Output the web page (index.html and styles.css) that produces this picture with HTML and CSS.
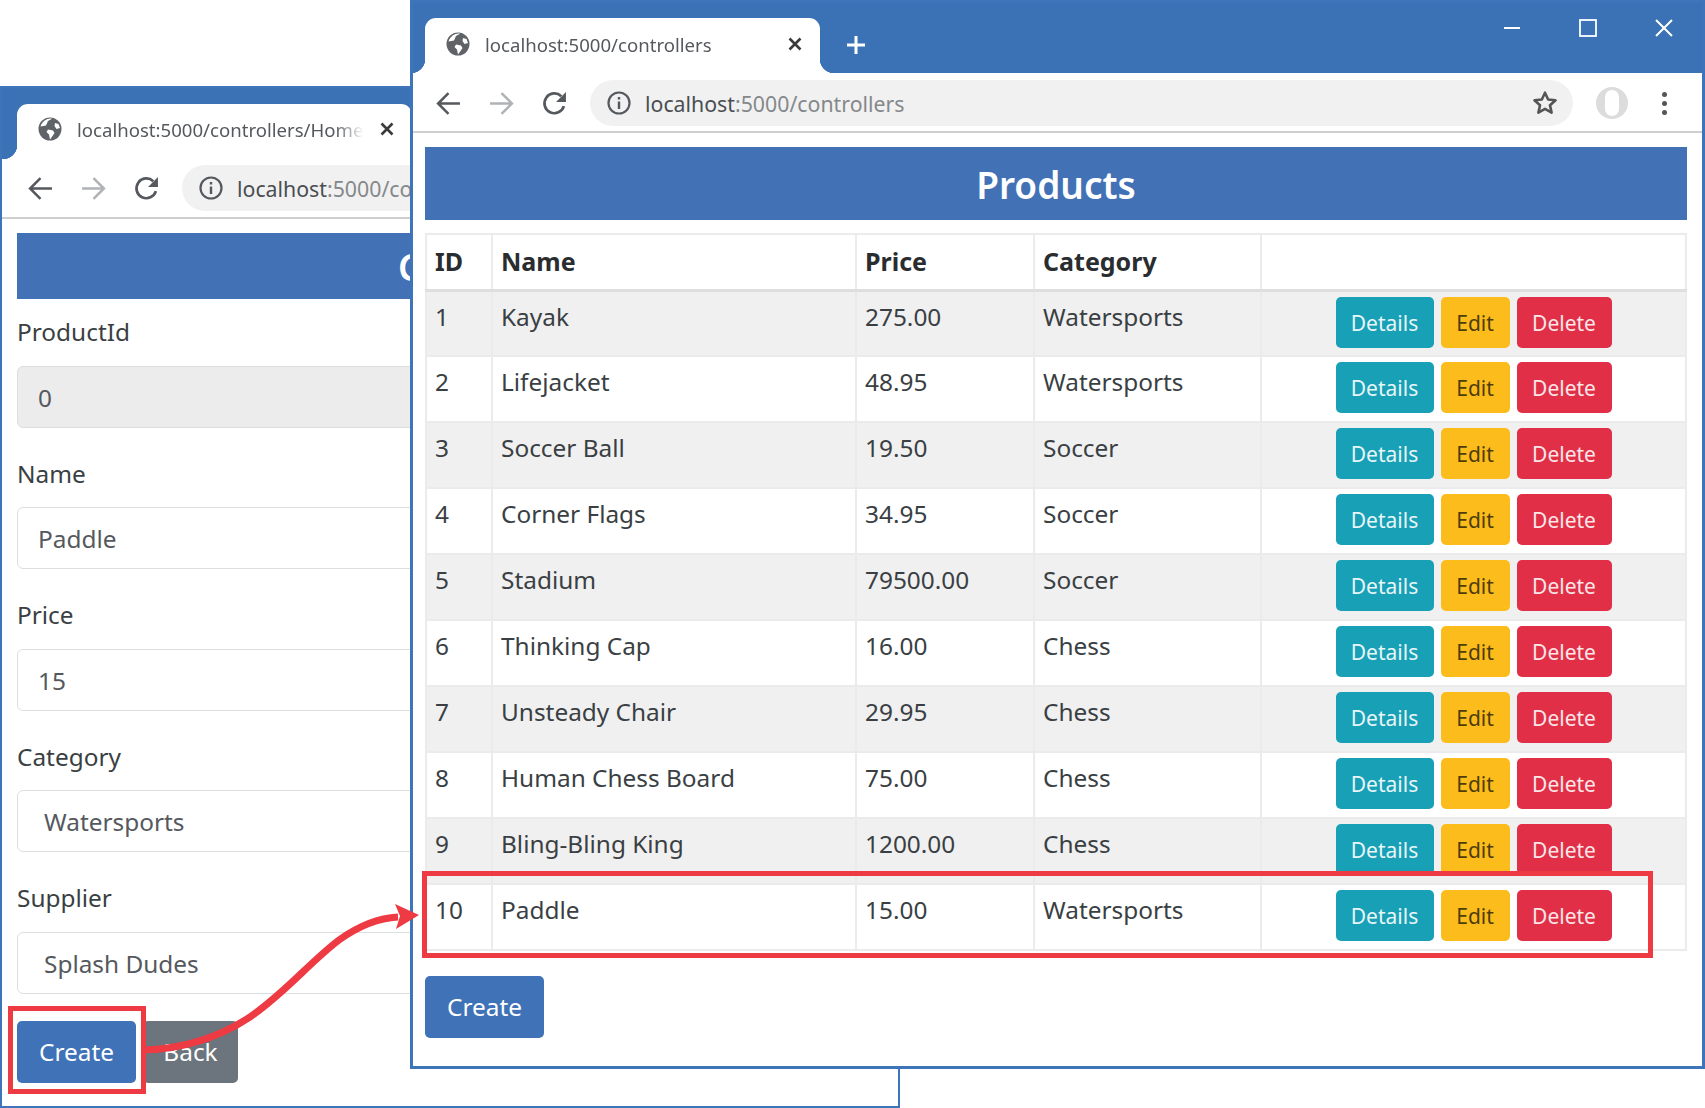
FILE: index.html
```html
<!DOCTYPE html>
<html lang="en">
<head>
    <meta charset="UTF-8">
    <title>Products</title>
    <link rel="stylesheet" href="styles.css">
</head>
<body>
    <svg width="0" height="0" class="defs">
        <symbol id="globe" viewBox="0 0 24 24">
            <circle cx="12" cy="12" r="11.5" fill="#5f6368"/>
            <path fill="#fff" d="M2.5 9.5 8 8.5l2-4.5 4-2.2C10 .8 4.500 3.500 2.500 9.500zM10 12.500l5 1 1.500 2.500-2 3-2.500 3.500-1-5-2.500-2.500zM17 6l3.500 1 1.500 4-3.500 1-2-3z"/>
        </symbol>
        <symbol id="back" viewBox="0 0 24 24">
            <path fill="none" stroke="currentColor" stroke-width="2.400" d="M23 12H2M12 2 2 12l10 10"/>
        </symbol>
        <symbol id="reload" viewBox="0 0 24 24">
            <path fill="none" stroke="currentColor" stroke-width="2.600" d="M21 14.500A9.500 9.500 0 1 1 18.500 5"/>
            <path fill="currentColor" d="M23 1v9.500h-9.500z"/>
        </symbol>
        <symbol id="info" viewBox="0 0 24 24">
            <circle cx="12" cy="12" r="10.500" fill="none" stroke="currentColor" stroke-width="2.200"/>
            <path fill="currentColor" d="M10.800 10.500h2.400V18h-2.400zM10.800 6h2.400v2.400h-2.400z"/>
        </symbol>
        <symbol id="closex" viewBox="0 0 14 14">
            <path fill="none" stroke="currentColor" stroke-width="2.600" d="M1.500 1.500l11 11M12.500 1.500l-11 11"/>
        </symbol>
    </svg>

    <!-- form window, sits behind -->
    <div class="window window-back">
        <div class="titlebar">
            <div class="tab">
                <svg class="ico-globe"><use href="#globe"/></svg>
                <span class="tab-title">localhost:5000/controllers/Home/Create</span>
                <svg class="ico-close"><use href="#closex"/></svg>
            </div>
        </div>
        <div class="toolbar">
            <svg class="ico-nav"><use href="#back"/></svg>
            <svg class="ico-nav ico-forward"><use href="#back"/></svg>
            <svg class="ico-nav"><use href="#reload"/></svg>
            <div class="address">
                <svg class="ico-info"><use href="#info"/></svg>
                <span class="url">localhost<span class="url-rest">:5000/controllers/Home/Create</span></span>
            </div>
        </div>
        <div class="page">
            <h3 class="banner banner-form">Create Product</h3>
            <form class="product-form">
                <div class="field">
                    <label>ProductId</label>
                    <div class="input input-disabled">0</div>
                </div>
                <div class="field">
                    <label>Name</label>
                    <div class="input">Paddle</div>
                </div>
                <div class="field">
                    <label>Price</label>
                    <div class="input">15</div>
                </div>
                <div class="field">
                    <label>Category</label>
                    <div class="input input-select">Watersports</div>
                </div>
                <div class="field">
                    <label>Supplier</label>
                    <div class="input input-select">Splash Dudes</div>
                </div>
                <div class="form-buttons">
                    <button type="button" class="btn btn-lg btn-primary">Create</button>
                    <button type="button" class="btn btn-lg btn-secondary">Back</button>
                </div>
            </form>
        </div>
    </div>

    <!-- list window -->
    <div class="window window-front">
        <div class="titlebar">
            <div class="tab">
                <svg class="ico-globe"><use href="#globe"/></svg>
                <span class="tab-title">localhost:5000/controllers</span>
                <svg class="ico-close"><use href="#closex"/></svg>
            </div>
            <svg class="ico-plus" viewBox="0 0 20 20"><path fill="none" stroke="#fff" stroke-width="3" d="M10 1v18M1 10h18"/></svg>
            <div class="win-controls">
                <svg viewBox="0 0 20 20"><path fill="none" stroke="#fff" stroke-width="2" d="M2 10h16"/></svg>
                <svg viewBox="0 0 20 20"><rect x="2" y="2" width="16" height="16" fill="none" stroke="#fff" stroke-width="1.800"/></svg>
                <svg viewBox="0 0 20 20"><path fill="none" stroke="#fff" stroke-width="2" d="M2 2l16 16M18 2 2 18"/></svg>
            </div>
        </div>
        <div class="toolbar">
            <svg class="ico-nav"><use href="#back"/></svg>
            <svg class="ico-nav ico-forward"><use href="#back"/></svg>
            <svg class="ico-nav"><use href="#reload"/></svg>
            <div class="address">
                <svg class="ico-info"><use href="#info"/></svg>
                <span class="url">localhost<span class="url-rest">:5000/controllers</span></span>
                <svg class="ico-star" viewBox="0 0 24 24"><path fill="none" stroke="#555" stroke-width="2.400" stroke-linejoin="round" d="M12 2.500l2.900 6.300 6.800.7-5.100 4.600 1.500 6.800-6.100-3.500-6.100 3.500 1.500-6.800-5.100-4.600 6.800-.7z"/></svg>
            </div>
            <div class="avatar"><span class="avatar-head"></span></div>
            <div class="dots"><i></i><i></i><i></i></div>
        </div>
        <div class="page">
            <h3 class="banner">Products</h3>
            <table class="products">
                <colgroup>
                    <col class="col-id"><col class="col-name"><col class="col-price"><col class="col-cat"><col>
                </colgroup>
                <thead>
                    <tr><th>ID</th><th>Name</th><th>Price</th><th>Category</th><th></th></tr>
                </thead>
                <tbody>
                    <tr><td>1</td><td>Kayak</td><td>275.00</td><td>Watersports</td><td class="actions"><span class="btn btn-info">Details</span><span class="btn btn-warning">Edit</span><span class="btn btn-danger">Delete</span></td></tr>
                    <tr><td>2</td><td>Lifejacket</td><td>48.95</td><td>Watersports</td><td class="actions"><span class="btn btn-info">Details</span><span class="btn btn-warning">Edit</span><span class="btn btn-danger">Delete</span></td></tr>
                    <tr><td>3</td><td>Soccer Ball</td><td>19.50</td><td>Soccer</td><td class="actions"><span class="btn btn-info">Details</span><span class="btn btn-warning">Edit</span><span class="btn btn-danger">Delete</span></td></tr>
                    <tr><td>4</td><td>Corner Flags</td><td>34.95</td><td>Soccer</td><td class="actions"><span class="btn btn-info">Details</span><span class="btn btn-warning">Edit</span><span class="btn btn-danger">Delete</span></td></tr>
                    <tr><td>5</td><td>Stadium</td><td>79500.00</td><td>Soccer</td><td class="actions"><span class="btn btn-info">Details</span><span class="btn btn-warning">Edit</span><span class="btn btn-danger">Delete</span></td></tr>
                    <tr><td>6</td><td>Thinking Cap</td><td>16.00</td><td>Chess</td><td class="actions"><span class="btn btn-info">Details</span><span class="btn btn-warning">Edit</span><span class="btn btn-danger">Delete</span></td></tr>
                    <tr><td>7</td><td>Unsteady Chair</td><td>29.95</td><td>Chess</td><td class="actions"><span class="btn btn-info">Details</span><span class="btn btn-warning">Edit</span><span class="btn btn-danger">Delete</span></td></tr>
                    <tr><td>8</td><td>Human Chess Board</td><td>75.00</td><td>Chess</td><td class="actions"><span class="btn btn-info">Details</span><span class="btn btn-warning">Edit</span><span class="btn btn-danger">Delete</span></td></tr>
                    <tr><td>9</td><td>Bling-Bling King</td><td>1200.00</td><td>Chess</td><td class="actions"><span class="btn btn-info">Details</span><span class="btn btn-warning">Edit</span><span class="btn btn-danger">Delete</span></td></tr>
                    <tr><td>10</td><td>Paddle</td><td>15.00</td><td>Watersports</td><td class="actions"><span class="btn btn-info">Details</span><span class="btn btn-warning">Edit</span><span class="btn btn-danger">Delete</span></td></tr>
                </tbody>
            </table>
            <button type="button" class="btn btn-lg btn-primary btn-create">Create</button>
        </div>
    </div>

    <!-- red callouts drawn over the screenshots -->
    <div class="callout callout-create"></div>
    <div class="callout callout-row"></div>
    <svg class="arrow" viewBox="0 0 1705 1108">
        <path fill="none" stroke="#ee3a43" stroke-width="7" d="M143 1050C180 1049 215 1040 250 1017C285 993 310 962 339 940C360 925 378 918 398 917"/>
        <path fill="#ee3a43" d="M395 904 419 915 396 929 400 916z"/>
    </svg>
</body>
</html>
```

FILE: styles.css
```css
* {
    box-sizing: border-box;
}
html, body {
    margin: 0;
    height: 100%;
}
body {
    position: relative;
    width: 1705px;
    height: 1108px;
    overflow: hidden;
    background-color: #fff;
    color: #3a3f44;
    font-family: "Noto Sans", "Open Sans", Arial, sans-serif;
    font-size: 24.4px;
}
.defs {
    position: absolute;
}

/* windows */
.window {
    position: absolute;
    display: flex;
    flex-direction: column;
    background-color: #fff;
    border: 2px solid #3d74ba;
    overflow: hidden;
}
.window-back {
    left: 0;
    top: 86px;
    width: 900px;
    height: 1022px;
}
.window-front {
    left: 410px;
    top: 0;
    width: 1295px;
    height: 1069px;
    border-width: 3px;
}
.titlebar {
    display: flex;
    align-items: flex-end;
    flex: none;
    height: 70px;
    padding-left: 12px;
    background-color: #3b71b5;
}
.window-back .titlebar {
    height: 71px;
    padding-left: 15px;
}
.tab {
    position: relative;
    display: flex;
    align-items: center;
    width: 395px;
    height: 55px;
    padding: 0 18px 3px 21px;
    background-color: #fff;
    border-radius: 11px 11px 0 0;
}
.window-back .tab {
    padding-bottom: 5px;
}
.tab::before, .tab::after {
    content: "";
    position: absolute;
    bottom: 0;
    width: 14px;
    height: 14px;
}
.tab::before {
    left: -14px;
    background: radial-gradient(circle at 0 0, #3b71b5 14px, #fff 14.5px);
}
.tab::after {
    right: -14px;
    background: radial-gradient(circle at 100% 0, #3b71b5 14px, #fff 14.5px);
}
.ico-globe {
    flex: none;
    width: 24px;
    height: 24px;
}
.tab-title {
    flex: 1;
    margin-left: 15px;
    overflow: hidden;
    white-space: nowrap;
    font-size: 18.6px;
    color: #55595e;
    -webkit-mask-image: linear-gradient(to right, #000 90%, transparent 100%);
    mask-image: linear-gradient(to right, #000 90%, transparent 100%);
}
.ico-close {
    flex: none;
    width: 14px;
    height: 14px;
    margin-left: 16px;
    color: #3a3a3a;
}
.ico-plus {
    width: 20px;
    height: 20px;
    margin: 0 0 18px 26px;
}
.win-controls {
    display: flex;
    gap: 56px;
    margin: 0 28px 35px auto;
    align-self: flex-end;
}
.win-controls svg {
    width: 20px;
    height: 20px;
}

/* toolbar */
.toolbar {
    display: flex;
    align-items: center;
    flex: none;
    height: 60px;
    padding: 2px 15px 0 23px;
    border-bottom: 2px solid #cfcfcf;
    color: #55595e;
}
.window-back .toolbar {
    padding-top: 0;
    padding-left: 26px;
}
.ico-nav {
    flex: none;
    width: 25px;
    height: 25px;
    margin-right: 28px;
}
.ico-forward {
    color: #b0b3b6;
    transform: scaleX(-1);
}
.address {
    display: flex;
    align-items: center;
    flex: 1;
    height: 46px;
    margin-left: -5px;
    padding: 0 15px 0 17px;
    min-width: 0;
    background-color: #f1f1f1;
    border-radius: 23px;
}
.ico-info {
    flex: none;
    width: 24px;
    height: 24px;
}
.url {
    margin-left: 14px;
    font-size: 21.300px;
    white-space: nowrap;
    color: #4a4e52;
}
.url-rest {
    color: #85888b;
}
.ico-star {
    width: 26px;
    height: 26px;
    margin-left: auto;
}
.avatar {
    position: relative;
    flex: none;
    width: 32px;
    height: 32px;
    margin-left: 23px;
    background-color: #dcdcdc;
    border-radius: 50%;
}
.avatar-head {
    position: absolute;
    left: 9px;
    top: 3px;
    width: 14px;
    height: 26px;
    background-color: #fff;
    border-radius: 7px;
}
.dots {
    display: flex;
    flex-direction: column;
    gap: 4px;
    margin-left: 34px;
    margin-right: 20px;
}
.dots i {
    width: 5px;
    height: 5px;
    background-color: #555;
    border-radius: 50%;
}

/* page content */
.page {
    flex: 1;
    padding: 14px 15px;
}
.window-front .page {
    padding-left: 12px;
}
.banner {
    margin: 0;
    height: 73px;
    line-height: 76px;
    background-color: #4272b5;
    color: #fff;
    font-size: 37px;
    font-weight: 600;
    text-align: center;
}
/* title starts right at the edge of the front window */
.banner-form {
    height: 66px;
    line-height: 68px;
    padding-left: 166px;
}
.product-form {
    margin-top: 8px;
}
.field {
    margin-bottom: 21px;
}
.field label {
    display: block;
    height: 58.500px;
    line-height: 50px;
}
.input {
    height: 62px;
    line-height: 61px;
    padding: 0 20px;
    background-color: #fff;
    border: 1px solid #dcdfe2;
    border-radius: 6px;
    color: #55595e;
}
.input-disabled {
    background-color: #ececec;
}
.input-select {
    padding-left: 26px;
}
.form-buttons {
    display: flex;
    margin-top: 27px;
}

/* buttons */
.btn {
    display: inline-block;
    height: 51px;
    padding: 0 14px;
    border: none;
    border-radius: 5px;
    font-family: inherit;
    font-size: 21px;
    line-height: 53px;
    color: #fff;
}
.btn + .btn {
    margin-left: 7px;
}
.btn-lg {
    width: 119px;
    height: 62px;
    padding: 0;
    font-size: 24.4px;
    line-height: 60px;
}
.btn-primary {
    background-color: #3f72b7;
}
.btn-secondary {
    width: 95px;
    margin-left: 8px;
    background-color: #6c757d;
}
.btn-info {
    width: 98px;
    padding: 0;
    text-align: center;
    background-color: #18a0b7;
    color: #e8f6f8;
}
.btn-warning {
    width: 69px;
    padding: 0;
    text-align: center;
    background-color: #fbbc1c;
    color: #4e3d0a;
}
.btn-danger {
    width: 95px;
    padding: 0;
    text-align: center;
    background-color: #e02f46;
    color: #fbe6e9;
}
.btn-create {
    display: block;
    margin-top: 25px;
}

/* products table */
.products {
    width: 100%;
    table-layout: fixed;
    border-collapse: collapse;
    margin-top: 13px;
}
.col-id { width: 66px; }
.col-name { width: 364px; }
.col-price { width: 178px; }
.col-cat { width: 227px; }
.products th, .products td {
    padding: 10px 8px;
    text-align: left;
    vertical-align: top;
    border: 2px solid #ebebeb;
}
.products th {
    height: 56px;
    font-size: 25px;
    font-weight: 700;
    color: #2a2d30;
    border-bottom: 3px solid #dedede;
    line-height: 32px;
}
.products td {
    height: 66px;
    padding-top: 7px;
    line-height: 36px;
}
.products tbody tr:nth-child(odd) {
    background-color: #f0f0f0;
}
.products .actions {
    padding: 5px 0 0;
    text-align: center;
    white-space: nowrap;
}

/* annotations */
.callout {
    position: absolute;
    border: 5px solid #ee3a43;
}
.callout-create {
    left: 8px;
    top: 1006px;
    width: 138px;
    height: 88px;
}
.callout-row {
    left: 422px;
    top: 871px;
    width: 1231px;
    height: 87px;
}
.arrow {
    position: absolute;
    left: 0;
    top: 0;
    width: 1705px;
    height: 1108px;
}
```
